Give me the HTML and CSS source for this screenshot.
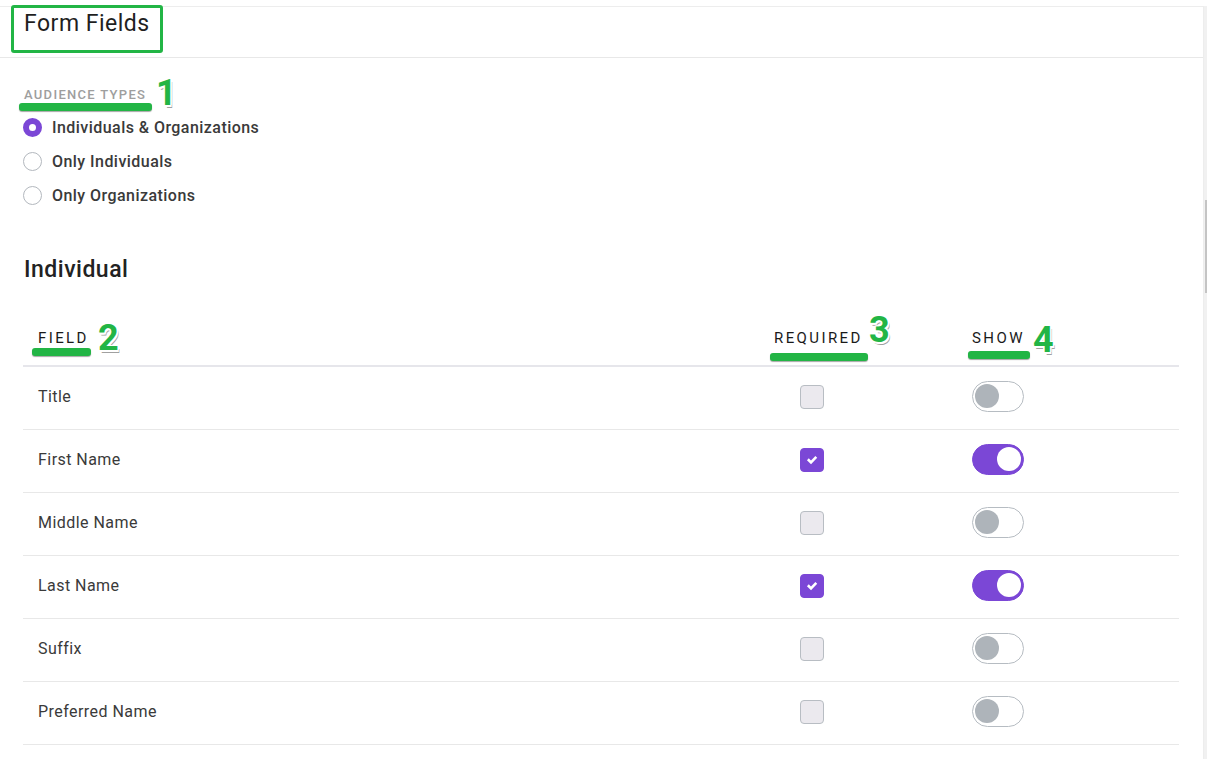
FILE: index.html
```html
<!DOCTYPE html>
<html lang="en">
<head>
  <meta charset="UTF-8" />
  <title>Form Fields</title>
  <link rel="stylesheet" href="styles.css">
</head>
<body>
  <div class="layout">
    <div class="panel">
      <div class="panel-header">
        <h1>Form Fields</h1>
        <span class="mark-box"></span>
      </div>

      <div class="panel-body">
        <div class="section-label">Audience Types</div>
        <span class="mark-line mark-audience"></span>
        <span class="mark-num mark-1">1</span>

        <div class="radio-list">
          <label class="radio"><span class="radio-dot checked"></span>Individuals &amp; Organizations</label>
          <label class="radio"><span class="radio-dot"></span>Only Individuals</label>
          <label class="radio"><span class="radio-dot"></span>Only Organizations</label>
        </div>

        <h2>Individual</h2>

        <div class="fields">
          <div class="fields-head">
            <div class="col-field">Field</div>
            <div class="col-required">Required</div>
            <div class="col-show">Show</div>
          </div>

          <div class="fields-row">
            <div class="col-field">Title</div>
            <div class="col-required"><span class="check"></span></div>
            <div class="col-show"><span class="toggle"></span></div>
          </div>
          <div class="fields-row">
            <div class="col-field">First Name</div>
            <div class="col-required"><span class="check on"><svg viewBox="0 0 12 12"><path d="M2.8 6.2 L5 8.4 L9.4 3.8" /></svg></span></div>
            <div class="col-show"><span class="toggle on"></span></div>
          </div>
          <div class="fields-row">
            <div class="col-field">Middle Name</div>
            <div class="col-required"><span class="check"></span></div>
            <div class="col-show"><span class="toggle"></span></div>
          </div>
          <div class="fields-row">
            <div class="col-field">Last Name</div>
            <div class="col-required"><span class="check on"><svg viewBox="0 0 12 12"><path d="M2.8 6.2 L5 8.4 L9.4 3.8" /></svg></span></div>
            <div class="col-show"><span class="toggle on"></span></div>
          </div>
          <div class="fields-row">
            <div class="col-field">Suffix</div>
            <div class="col-required"><span class="check"></span></div>
            <div class="col-show"><span class="toggle"></span></div>
          </div>
          <div class="fields-row">
            <div class="col-field">Preferred Name</div>
            <div class="col-required"><span class="check"></span></div>
            <div class="col-show"><span class="toggle"></span></div>
          </div>
          <div class="fields-row">
            <div class="col-field"></div>
            <div class="col-required"><span class="check"></span></div>
            <div class="col-show"><span class="toggle"></span></div>
          </div>
        </div>

        <span class="mark-line mark-field"></span>
        <span class="mark-num mark-2">2</span>
        <span class="mark-line mark-required"></span>
        <span class="mark-num mark-3">3</span>
        <span class="mark-line mark-show"></span>
        <span class="mark-num mark-4">4</span>
      </div>
    </div>
    <div class="scrollbar"><span class="thumb"></span></div>
  </div>
</body>
</html>
```

FILE: styles.css
```css
html, body {
  margin: 0;
  height: 100%;
  overflow: hidden;
}
body {
  font-family: Roboto, 'Liberation Sans', sans-serif;
  background: #fff;
  color: #2d2d2d;
}
.layout {
  display: flex;
  padding-top: 6px;
  height: 753px;
}
.panel {
  position: relative;
  flex: 1;
  border-top: 1px solid #ededed;
  border-right: 1px solid #ededed;
}
.scrollbar {
  position: relative;
  width: 3px;
  background: #f1f1f1;
}
.scrollbar .thumb {
  position: absolute;
  right: 0;
  top: 194px;
  width: 2px;
  height: 93px;
  background: #c4c4c4;
}

/* header */
.panel-header {
  position: relative;
  height: 50px;
  border-bottom: 1px solid #e8e8e8;
  padding-left: 24px;
}
.panel-header h1 {
  margin: 0;
  padding-top: 3px;
  font-size: 23px;
  line-height: 28px;
  font-weight: 400;
  letter-spacing: 0.5px;
  color: #1f1f1f;
}

/* body */
.panel-body {
  position: relative;
  padding: 29px 24px 0 23px;
}
.section-label {
  margin-left: 1px;
  font-size: 13px;
  line-height: 16px;
  font-weight: 500;
  letter-spacing: 1.3px;
  text-transform: uppercase;
  color: #9e9e9e;
}
.radio-list {
  margin-top: 7px;
  display: flex;
  flex-direction: column;
}
.radio {
  display: flex;
  align-items: center;
  gap: 10px;
  height: 34px;
  font-size: 16px;
  font-weight: 500;
  letter-spacing: 0.45px;
  color: #3a3a3a;
}
.radio-dot {
  box-sizing: border-box;
  width: 19px;
  height: 19px;
  border-radius: 50%;
  border: 1px solid #b3b8be;
  background: #fff;
}
.radio-dot.checked {
  border: 6px solid #7b47d6;
  background: #fff;
}
h2 {
  margin: 44px 0 0 1px;
  font-size: 23px;
  line-height: 28px;
  font-weight: 500;
  letter-spacing: 0.5px;
  color: #222;
}

/* field table */
.fields {
  margin-top: 26px;
}
.fields-head, .fields-row {
  display: grid;
  grid-template-columns: 736px 198px 1fr;
  align-items: center;
}
.fields-head {
  height: 55px;
  border-bottom: 2px solid #e6e6eb;
  font-size: 15px;
  font-weight: 400;
  letter-spacing: 2.4px;
  text-transform: uppercase;
  color: #1a1a1a;
}
.fields-row {
  box-sizing: border-box;
  height: 63px;
  padding-bottom: 3px;
  border-bottom: 1px solid #e8e8e8;
  font-size: 16px;
  letter-spacing: 0.45px;
  color: #3a3a3a;
}
.col-field, .col-required, .col-show {
  padding-left: 15px;
  display: flex;
  align-items: center;
}
.fields-row .col-required {
  padding-left: 41px;
}
.check {
  box-sizing: border-box;
  width: 24px;
  height: 24px;
  border-radius: 4px;
  border: 1px solid #b8bdc3;
  background: #ebe9ee;
  display: flex;
  align-items: center;
  justify-content: center;
}
.check.on {
  border-color: #7b47d6;
  background: #7b47d6;
}
.check svg {
  width: 12px;
  height: 12px;
  fill: none;
  stroke: #fff;
  stroke-width: 2.6;
  stroke-linecap: square;
}
.toggle {
  box-sizing: border-box;
  position: relative;
  width: 52px;
  height: 31px;
  border-radius: 16px;
  border: 1.5px solid #b6bcc2;
  background: #fff;
}
.toggle::after {
  content: "";
  position: absolute;
  left: 2px;
  top: 2px;
  width: 24px;
  height: 24px;
  border-radius: 50%;
  background: #aeb4ba;
}
.toggle.on {
  border-color: #7b47d6;
  background: #7b47d6;
}
.toggle.on::after {
  left: auto;
  right: 2px;
  background: #fff;
}

/* annotations drawn over the screenshot */
.mark-box {
  position: absolute;
  left: 11px;
  top: -2px;
  width: 146px;
  height: 42px;
  border: 3px solid #22b545;
  border-radius: 3px;
}
.mark-line {
  position: absolute;
  height: 8px;
  border-radius: 3px;
  background: #22b545;
  box-shadow: 0 1px 1px rgba(0, 0, 0, 0.35);
}
.mark-audience { left: 19px; top: 45px; width: 133px; }
.mark-field { left: 32px; top: 290px; width: 59px; }
.mark-required { left: 770px; top: 295px; width: 98px; }
.mark-show { left: 968px; top: 293px; width: 62px; }
.mark-num {
  position: absolute;
  font-size: 36px;
  line-height: 36px;
  font-weight: 700;
  color: #22b545;
  text-shadow: -1.5px 0 #fff, 1.5px 0 #fff, 0 -1.5px #fff, 0 1.5px #fff,
    -1px -1px #fff, 1px -1px #fff, -1px 1px #fff, 1.5px 2px #fff, 2px 3px #a0a0a0;
}
.mark-1 { left: 156px; top: 17px; }
.mark-2 { left: 98px; top: 262px; }
.mark-3 { left: 869px; top: 254px; }
.mark-4 { left: 1033px; top: 264px; }
```
